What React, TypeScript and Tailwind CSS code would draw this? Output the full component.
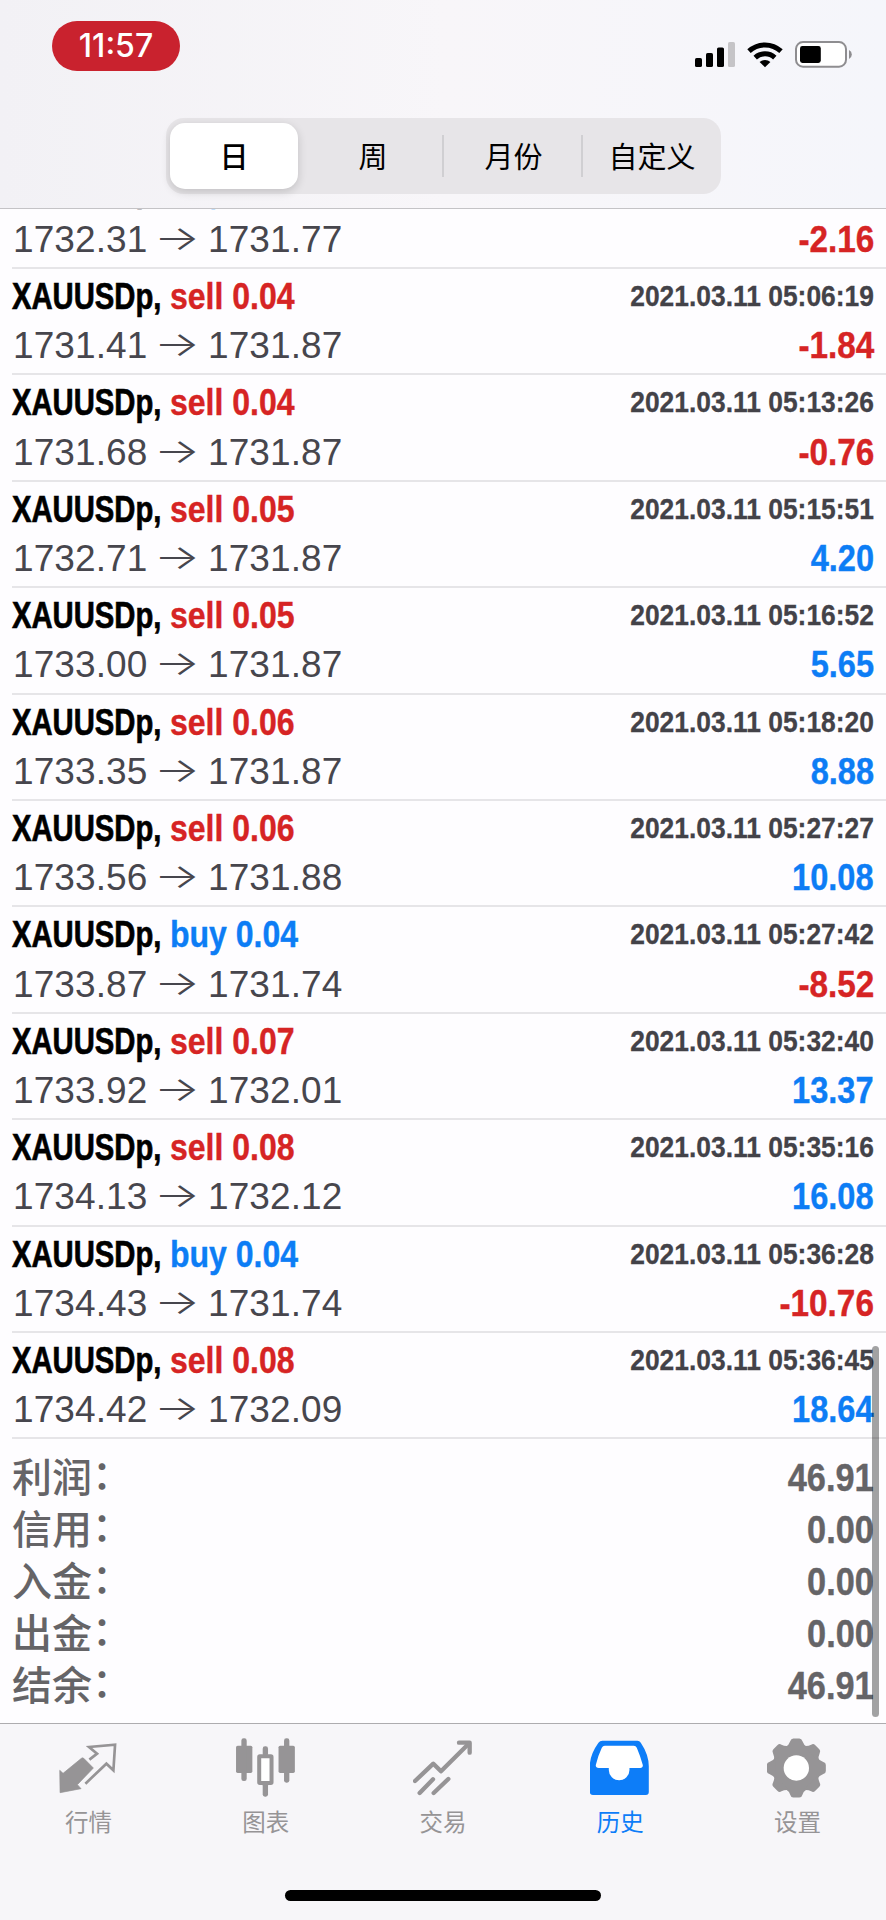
import React from "react";

type Side = "sell" | "buy";
type Deal = { side: Side; lot: string; time: string; from: string; to: string; profit: string };

const deals: Deal[] = [
  { side: "buy", lot: "0.04", time: "2021.03.11 05:05:12", from: "1732.31", to: "1731.77", profit: "-2.16" },
  { side: "sell", lot: "0.04", time: "2021.03.11 05:06:19", from: "1731.41", to: "1731.87", profit: "-1.84" },
  { side: "sell", lot: "0.04", time: "2021.03.11 05:13:26", from: "1731.68", to: "1731.87", profit: "-0.76" },
  { side: "sell", lot: "0.05", time: "2021.03.11 05:15:51", from: "1732.71", to: "1731.87", profit: "4.20" },
  { side: "sell", lot: "0.05", time: "2021.03.11 05:16:52", from: "1733.00", to: "1731.87", profit: "5.65" },
  { side: "sell", lot: "0.06", time: "2021.03.11 05:18:20", from: "1733.35", to: "1731.87", profit: "8.88" },
  { side: "sell", lot: "0.06", time: "2021.03.11 05:27:27", from: "1733.56", to: "1731.88", profit: "10.08" },
  { side: "buy", lot: "0.04", time: "2021.03.11 05:27:42", from: "1733.87", to: "1731.74", profit: "-8.52" },
  { side: "sell", lot: "0.07", time: "2021.03.11 05:32:40", from: "1733.92", to: "1732.01", profit: "13.37" },
  { side: "sell", lot: "0.08", time: "2021.03.11 05:35:16", from: "1734.13", to: "1732.12", profit: "16.08" },
  { side: "buy", lot: "0.04", time: "2021.03.11 05:36:28", from: "1734.43", to: "1731.74", profit: "-10.76" },
  { side: "sell", lot: "0.08", time: "2021.03.11 05:36:45", from: "1734.42", to: "1732.09", profit: "18.64" },
];

const totals = [
  ["利润", "46.91"],
  ["信用", "0.00"],
  ["入金", "0.00"],
  ["出金", "0.00"],
  ["结余", "46.91"],
];

function DealRow({ deal }: { deal: Deal }) {
  const loss = deal.profit.startsWith("-");
  return (
    <div className="group ml-3 h-[106.4px] shrink-0 border-b-2 border-[#e6e5e8] pr-3">
      <div className="flex h-[55.2px] items-start justify-between whitespace-nowrap font-bold group-first:-translate-y-[2px]">
        <div className="flex text-[37px] leading-[55.2px]">
          <span className="w-[158px]">
            <span className="inline-block origin-left scale-x-[0.79] text-black [-webkit-text-stroke:0.7px]">XAUUSDp,</span>
          </span>
          <span className={deal.side === "sell" ? "inline-block origin-left scale-x-[0.865] text-[#d62424] [-webkit-text-stroke:0.4px]" : "inline-block origin-left scale-x-[0.865] text-[#0d7df5] [-webkit-text-stroke:0.4px]"}>
            {deal.side} {deal.lot}
          </span>
        </div>
        <span className="inline-block origin-right scale-x-[0.88] text-[30px] leading-[53.4px] text-[#434248] [-webkit-text-stroke:0.3px]">{deal.time}</span>
      </div>
      <div className="flex h-[43.4px] items-start justify-between whitespace-nowrap text-[37px] leading-[43.4px]">
        <div className="flex pl-px text-[#47464d]">
          <span className="w-[135px] tracking-[0.1px]">{deal.from}</span>
          <span className="-mt-[2px] mr-[2px] w-[58px] scale-x-[1.42] text-center font-['Inter'] text-[34px] font-light">→</span>
          <span className="tracking-[0.1px]">{deal.to}</span>
        </div>
        <span className={loss ? "inline-block origin-right scale-x-[0.9] font-bold text-[#d62424] [-webkit-text-stroke:0.4px]" : "inline-block origin-right scale-x-[0.88] font-bold text-[#0d7df5] [-webkit-text-stroke:0.4px]"}>
          {deal.profit}
        </span>
      </div>
    </div>
  );
}

function StatusIcons() {
  return (
    <svg className="h-[30px] w-[162px]" viewBox="693 39 162 30">
      <rect x="695" y="58" width="7" height="9" rx="1.6" />
      <rect x="706" y="53" width="7" height="14" rx="1.6" />
      <rect x="717" y="47.5" width="7" height="19.5" rx="1.6" />
      <rect x="728" y="42" width="7" height="25" rx="1.6" fill="#c5c4c7" />
      <g fill="none" stroke="#000" strokeWidth="5">
        <path d="M749 51.2 A23.5 23.5 0 0 1 781 51.2" />
        <path d="M755.2 57.6 A14.5 14.5 0 0 1 774.8 57.6" />
      </g>
      <path d="M759.6 62 A8 8 0 0 1 770.4 62 L765 67.2 Z" />
      <rect x="796" y="42.1" width="50" height="24.6" rx="7" fill="#fff" stroke="#8e8d90" strokeWidth="2" />
      <rect x="800" y="46" width="20.8" height="17" rx="2.4" />
      <path d="M849 50 a5 5 0 0 1 0 9 z" fill="#8e8d90" />
    </svg>
  );
}

const MarketIcon = () => (
  <svg className="size-[60px]" viewBox="175.8 70 180 180">
    <path d="M178 167 L188 176 L243 131 Q247 128 250 131 L279 160 L231 210 L242 222 L179 234 Z" fill="currentColor" stroke="currentColor" strokeWidth="2" strokeLinejoin="round" />
    <path d="M267 135 L290 117 L266 97 L344 90 L339 167 L318 147 L255 207" fill="none" stroke="currentColor" strokeWidth="8" />
  </svg>
);

const ChartIcon = () => (
  <svg className="size-[60px]" viewBox="707.4 70 180 180">
    <g fill="currentColor">
      <rect x="707.5" y="93" width="49" height="82" rx="5" />
      <rect x="723.5" y="71" width="16" height="128" rx="7" />
      <rect x="835" y="93" width="49" height="82" rx="5" />
      <rect x="851.5" y="71" width="16" height="133" rx="7" />
      <rect x="787.5" y="95" width="16" height="30" rx="7" />
      <rect x="787.5" y="205" width="16" height="41" rx="7" />
    </g>
    <rect x="777" y="125" width="37" height="80" rx="2" fill="#fff" stroke="currentColor" strokeWidth="12" />
  </svg>
);

const TradeIcon = () => (
  <svg className="size-[60px]" viewBox="1239 70 180 180">
    <g fill="none" stroke="currentColor" strokeWidth="13" strokeLinejoin="round" strokeLinecap="round">
      <path d="M1245 199 L1300 147 L1323 170 L1406 87" />
      <path d="M1377 84 H1409 V114" />
      <path d="M1259 235 L1299 194" />
      <path d="M1301 235 L1345 193" />
    </g>
  </svg>
);

const HistoryIcon = () => (
  <svg className="size-[60px]" viewBox="441.6 70 180 180">
    <path d="M479 78 H584 Q590 78 594 84 Q618 120 618 155 V232 Q618 241 609 241 H450 Q441 241 441 232 V155 Q441 120 467 84 Q471 78 479 78 Z" fill="currentColor" />
    <path d="M486 93 H573 Q579 93 582 99 Q592 122 600 151 Q601 160 592 160 H560 V166 A31 31 0 0 1 498 166 V160 H468 Q458 160 459 151 Q466 122 477 99 Q480 93 486 93 Z" fill="#fff" />
  </svg>
);

const GearIcon = () => (
  <svg className="size-[60px]" viewBox="973 70 180 180">
    <g fill="currentColor">
      <circle cx="1061" cy="160" r="70" />
      {[0, 45, 90, 135, 180, 225, 270, 315].map((a) => (
        <path key={a} d="M1028 98 Q1039 91 1043 79 Q1045 71.5 1052 71.5 H1070 Q1077 71.5 1079 79 Q1083 91 1094 98 Z" transform={`rotate(${a} 1061 160)`} />
      ))}
    </g>
    <circle cx="1061" cy="160" r="38" fill="#fff" />
  </svg>
);

const tabs = [
  { label: "行情", Icon: MarketIcon },
  { label: "图表", Icon: ChartIcon },
  { label: "交易", Icon: TradeIcon },
  { label: "历史", Icon: HistoryIcon, active: true },
  { label: "设置", Icon: GearIcon },
];

export default function App() {
  return (
    <div className="relative flex h-[1920px] w-[886px] flex-col overflow-hidden bg-[#fefdff] font-['Liberation_Sans','Noto_Sans_CJK_SC',sans-serif]">
      <header className="flex h-[209px] shrink-0 flex-col border-b border-[#c4c3c6] bg-linear-to-r from-[#f2f1f5] via-[#f8f6f9] to-[#f5f6fb]">
        <div className="flex h-[118px] items-start justify-between pl-[52px] pr-[31px]">
          <div className="mt-[20.5px] flex h-[50px] w-32 items-center justify-center rounded-[25px] bg-[#c9222e] pt-px font-['Inter'] text-[32px] font-medium leading-none text-white">
            11:57
          </div>
          <div className="mt-[39px]">
            <StatusIcons />
          </div>
        </div>
        <div className="ml-[166px] flex h-[76px] w-[555px] items-center rounded-[18px] bg-[#e7e5e8] px-1 font-['Noto_Sans_CJK_SC',sans-serif] text-[29px]">
          <div className="flex h-[66px] w-32 items-center justify-center rounded-[15px] bg-white font-medium shadow-[0_3px_10px_rgba(0,0,0,0.16)]">日</div>
          <div className="flex h-[42px] w-[146px] items-center justify-center border-r-2 border-[#d0cfd2] pl-1.5">周</div>
          <div className="flex h-[42px] w-[139px] items-center justify-center border-r-2 border-[#d0cfd2] pl-0.5">月份</div>
          <div className="flex h-[42px] flex-1 items-center justify-center pl-1">自定义</div>
        </div>
      </header>

      <main className="flex h-[1514px] shrink-0 flex-col overflow-hidden">
        <div className="-mt-[46.4px] flex shrink-0 flex-col">
          {deals.map((d) => (
            <DealRow key={d.time} deal={d} />
          ))}
        </div>
        <div className="flex flex-col pl-[13px] pr-3 pt-[10px] text-[#656467]">
          {totals.map(([label, value]) => (
            <div key={label} className="flex h-[52px] items-center justify-between text-[39px] font-medium leading-[52px]">
              <span className="-ml-px font-['Noto_Sans_CJK_SC',sans-serif] text-[40px]">
                {label}
                <span className="relative -top-[3px]">：</span>
              </span>
              <span className="inline-block origin-right scale-x-[0.88] pt-[5px] font-bold [-webkit-text-stroke:0.4px]">{value}</span>
            </div>
          ))}
        </div>
      </main>
      <div className="absolute left-[872px] top-[1346px] h-[371px] w-[7px] rounded-full bg-black/36" />

      <footer className="flex flex-1 flex-col border-t border-[#adacaf] bg-[#f7f6f9]">
        <nav className="flex pt-[14px]">
          {tabs.map(({ label, Icon, active }) => (
            <div key={label} className={active ? "flex flex-1 flex-col items-center text-[#0d7df8]" : "flex flex-1 flex-col items-center text-[#969496]"}>
              <Icon />
              <span className="mt-1.5 font-['Noto_Sans_CJK_SC',sans-serif] text-[23.5px] leading-[34px]">{label}</span>
            </div>
          ))}
        </nav>
        <div className="mx-auto mt-auto mb-[19px] h-[11.5px] w-[316px] rounded-full bg-black" />
      </footer>
    </div>
  );
}
